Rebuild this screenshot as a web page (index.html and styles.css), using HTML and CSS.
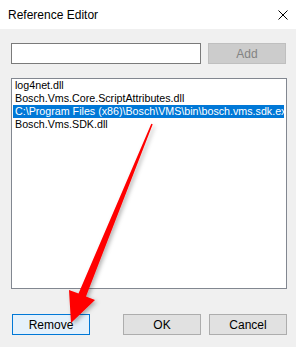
FILE: index.html
```html
<!DOCTYPE html>
<html>
<head>
    <title>Reference Editor</title>
    <link rel="stylesheet" href="styles.css">
</head>
<body>
    <div class="window">
        <div class="titlebar">
            <span class="title">Reference Editor</span>
            <svg class="close" width="10" height="10" viewBox="0 0 10 10">
                <path d="M0.5 0.5 L9.5 9.5 M9.5 0.5 L0.5 9.5" stroke="#000" stroke-width="1" fill="none"/>
            </svg>
        </div>
        <div class="content">
            <div class="add-row">
                <input type="text" class="textbox" />
                <button class="btn btn-disabled">Add</button>
            </div>
            <div class="listbox">
                <div class="item">log4net.dll</div>
                <div class="item">Bosch.Vms.Core.ScriptAttributes.dll</div>
                <div class="item selected">C:\Program Files (x86)\Bosch\VMS\bin\bosch.vms.sdk.exe</div>
                <div class="item">Bosch.Vms.SDK.dll</div>
            </div>
            <div class="button-row">
                <button class="btn btn-focus">Remove</button>
                <div class="right-buttons">
                    <button class="btn">OK</button>
                    <button class="btn">Cancel</button>
                </div>
            </div>
        </div>
        <!-- annotation arrow -->
        <svg class="arrow" width="296" height="347" viewBox="0 0 296 347">
            <defs>
                <filter id="shadow" x="-20%" y="-20%" width="140%" height="140%">
                    <feDropShadow dx="2" dy="2" stdDeviation="2" flood-color="#000" flood-opacity="0.3"/>
                </filter>
            </defs>
            <polygon filter="url(#shadow)" fill="#ff0000"
                points="151.3,123.7 152.7,124.3 86,296.5 95,300 71,323 69,290 78.5,293.5"/>
        </svg>
    </div>
</body>
</html>
```

FILE: styles.css
```css
body {
    margin: 0;
    padding: 0;
    background-color: #f0f0f0;
    font-family: "Liberation Sans", Arial, sans-serif;
}
.window {
    position: relative;
    width: 296px;
    height: 347px;
    overflow: hidden;
}
.titlebar {
    height: 29px;
    background-color: #fff;
    display: flex;
    align-items: center;
    justify-content: space-between;
    padding: 0 8px 0 8px;
}
.title {
    font-size: 12px;
    color: #000;
}
.close {
    margin-top: 1px;
}
.content {
    padding: 14px 9px 0 11px;
}
.add-row {
    display: flex;
    gap: 7px;
}
.textbox {
    box-sizing: border-box;
    width: 190px;
    height: 21px;
    margin: 0;
    border: 1px solid #7a7a7a;
    background: #fff;
    padding: 0;
}
.btn {
    box-sizing: border-box;
    width: 78px;
    height: 21px;
    margin: 0;
    padding: 0;
    border: 1px solid #adadad;
    background-color: #e1e1e1;
    font-family: "Liberation Sans", Arial, sans-serif;
    font-size: 12px;
    color: #000;
}
.btn-disabled {
    background-color: #cccccc;
    border-color: #bfbfbf;
    color: #838383;
}
.btn-focus {
    border-color: #0078d7;
    background-color: #e5f1fb;
}
.listbox {
    box-sizing: border-box;
    margin-top: 14px;
    width: 276px;
    height: 211px;
    border: 1px solid #828790;
    background: #fff;
    padding: 0 2px 0 1px;
    overflow: hidden;
}
.item {
    height: 13px;
    line-height: 13px;
    font-size: 10.7px;
    padding-left: 2px;
    white-space: nowrap;
    overflow: hidden;
    color: #000;
}
.item.selected {
    background-color: #0078d7;
    color: #fff;
}
.button-row {
    display: flex;
    justify-content: space-between;
    margin-top: 25px;
    padding-left: 1px;
}
.right-buttons {
    display: flex;
    gap: 8px;
}
.arrow {
    position: absolute;
    left: 0;
    top: 0;
    pointer-events: none;
}
```
